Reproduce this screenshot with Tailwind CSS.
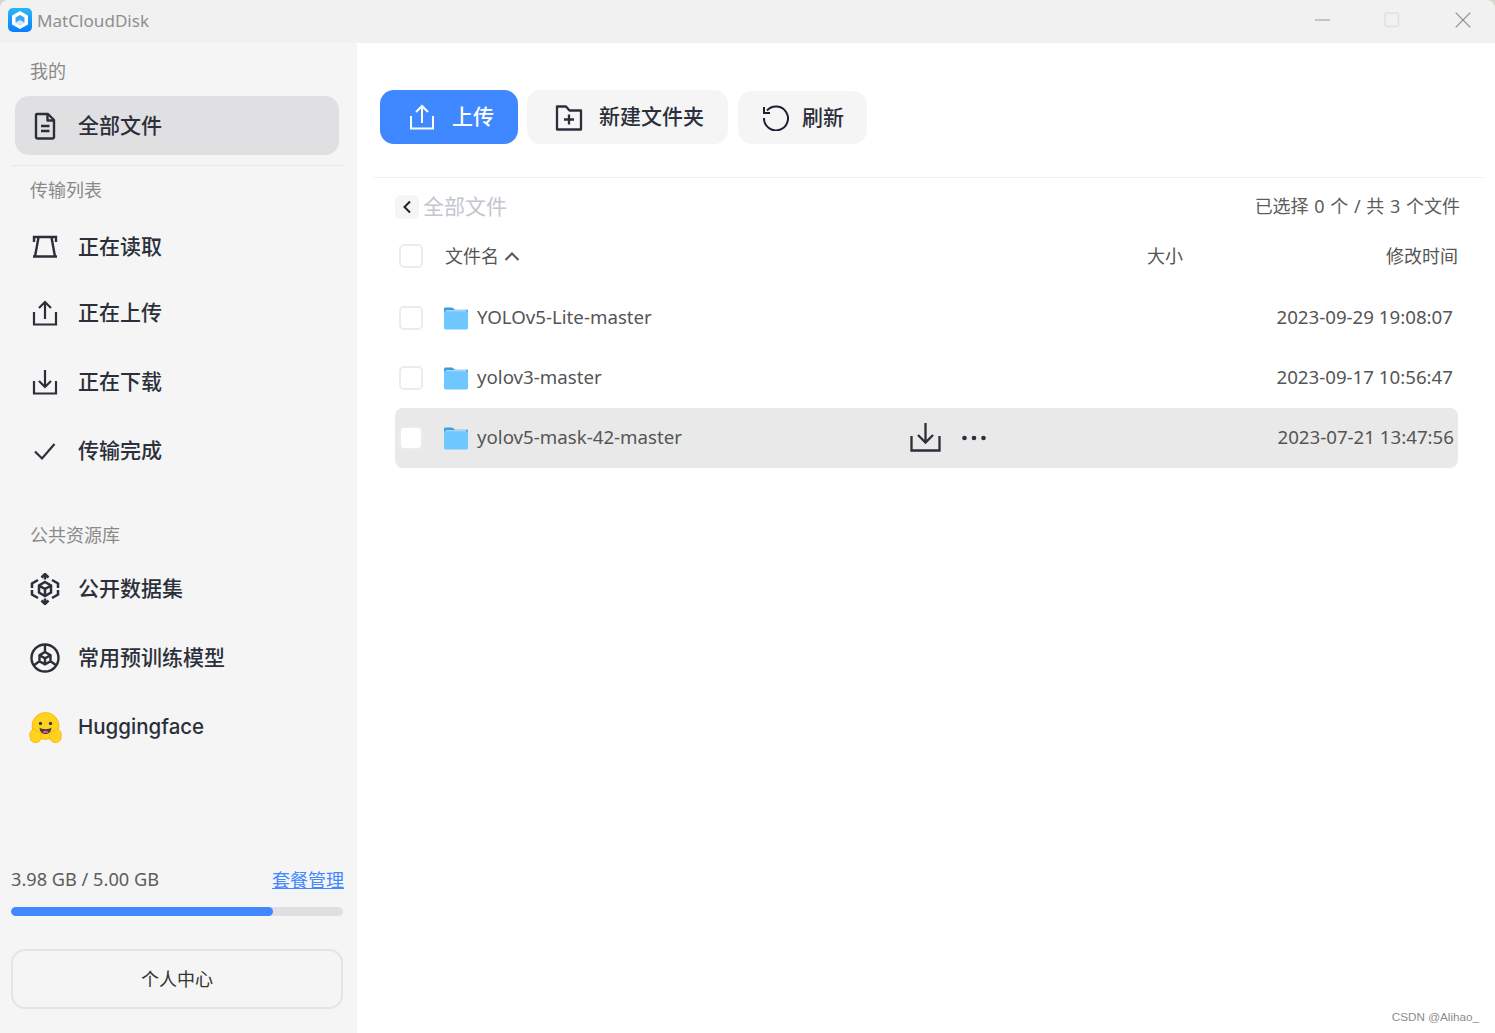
<!DOCTYPE html>
<html lang="zh-CN">
<head>
    <meta charset="UTF-8">
    <title>MatCloudDisk</title>
    <script src="https://cdn.jsdelivr.net/npm/@tailwindcss/browser@4"></script>
</head>
<body class="bg-[#d6d6ce] font-['Noto_Sans','Noto_Sans_CJK_SC',sans-serif] antialiased">
    <div class="relative w-[1495px] h-[1033px] flex flex-col overflow-hidden rounded-t-lg">
        <!-- title bar -->
        <header class="h-[43px] shrink-0 bg-[#f1f1f1] flex items-center pl-2 pb-[3px]">
            <svg width="24" height="24" viewBox="0 0 24 24">
                <defs>
                    <linearGradient id="logo" x1="0" y1="0" x2="0" y2="1">
                        <stop offset="0" stop-color="#29b6f6"/>
                        <stop offset="1" stop-color="#0a7dff"/>
                    </linearGradient>
                </defs>
                <rect width="24" height="24" rx="5" fill="url(#logo)"/>
                <path d="M12 3 20 7.600v8.800L12 21 4 16.400V7.600Z" fill="#fff"/>
                <path d="M12 7 16.500 9.600v4.800L12 17 7.500 14.400V9.600Z" fill="#3aa4f8"/>
                <path d="M7 15 12 12l5 3-5 3Z" fill="#cfeaff"/>
            </svg>
            <span class="ml-[5px] mt-[2px] text-[17.1px] text-[#8f8f8f]">MatCloudDisk</span>
            <div class="ml-auto flex items-center">
                <svg width="16" height="16" viewBox="0 0 16 16" class="mr-[53px]"><path d="M0 8h15" stroke="#9a9a9a" stroke-width="1.2"/></svg>
                <svg width="16" height="16" viewBox="0 0 16 16" class="mr-[55px]"><rect x="1" y="1" width="13.5" height="13.5" rx="2" fill="none" stroke="#dfdfdf" stroke-width="1.4"/></svg>
                <svg width="16" height="16" viewBox="0 0 16 16" class="mr-[24px]"><path d="M.7.7 15.3 15.3M15.3.7.7 15.3" stroke="#8c8c8c" stroke-width="1.2"/></svg>
            </div>
        </header>

        <div class="flex flex-1 min-h-0">
            <!-- sidebar -->
            <aside class="w-[357px] shrink-0 bg-[#f5f5f5] flex flex-col">
                <div class="h-[53px] pl-[30px] pt-[15px] text-[18px] leading-[27px] text-[#8a8a8a]">我的</div>
                <a class="h-[59px] ml-[15px] w-[324px] rounded-[14px] bg-[#e0e0e2] flex items-center pl-[17px] text-[21px] font-medium text-[#2b2f3a]">
                    <svg width="26" height="28" viewBox="0 0 26 28" class="mr-[20px] shrink-0" fill="none" stroke="#2b2f3a" stroke-width="2.4" stroke-linejoin="round"><path d="M5 2h11l6 6v17a1.500 1.500 0 0 1-1.500 1.500h-15A1.500 1.500 0 0 1 4 25V3a1 1 0 0 1 1-1Z"/><path d="M15.500 2v6.500H22M9 14h8.500M9 19h8.500"/></svg>
                    全部文件
                </a>
                <div class="mt-[10px] mx-[11px] w-[333px] h-px bg-[#e9e9e9]"></div>
                <div class="h-[51px] pl-[30px] pt-[11px] text-[18px] leading-[27px] text-[#8a8a8a]">传输列表</div>
                <a class="h-[59px] flex items-center pl-[32px] text-[21px] font-medium text-[#2b2f3a]">
                    <svg width="26" height="24" viewBox="0 0 26 24" class="mr-[20px] shrink-0" fill="none" stroke="#2b2f3a" stroke-width="2.400"><path d="M2 7V2h22v5M6.500 2.500 3 21.500h20L19.500 2.500M1 21.500h24"/></svg>
                    正在读取
                </a>
                <a class="h-[59px] mt-[7px] flex items-center pl-[32px] text-[21px] font-medium text-[#2b2f3a]">
                    <svg width="26" height="26" viewBox="0 0 26 26" class="mr-[20px] shrink-0" fill="none" stroke="#2b2f3a" stroke-width="2.200"><path d="M2 12v12.500h22V12M13 19V2M7 8l6-6 6 6"/></svg>
                    正在上传
                </a>
                <a class="h-[59px] mt-[10px] flex items-center pl-[32px] text-[21px] font-medium text-[#2b2f3a]">
                    <svg width="26" height="26" viewBox="0 0 26 26" class="mr-[20px] shrink-0" fill="none" stroke="#2b2f3a" stroke-width="2.200"><path d="M2 12v12.500h22V12M13 1v17M7 12l6 6 6-6"/></svg>
                    正在下载
                </a>
                <a class="h-[59px] mt-[10px] flex items-center pl-[32px] text-[21px] font-medium text-[#2b2f3a]">
                    <svg width="26" height="26" viewBox="0 0 26 26" class="mr-[20px] shrink-0" fill="none" stroke="#2b2f3a" stroke-width="2.200"><path d="M3 13.500 10 20.500 22.500 6"/></svg>
                    传输完成
                </a>
                <div class="h-[44px] mt-[32px] pl-[30px] pt-[10px] text-[18px] leading-[27px] text-[#8a8a8a]">公共资源库</div>
                <a class="h-[59px] mt-[3px] flex items-center pl-[30px] text-[21px] font-medium text-[#2b2f3a]">
                    <svg width="30" height="32" viewBox="0 0 30 32" class="mr-[18px] shrink-0" fill="none" stroke="#2b2f3a" stroke-width="2.500">
                        <path d="M15 9 21 12.500v7L15 23l-6-3.500v-7ZM9 12.500l6 3.500 6-3.500M15 16v7"/>
                        <path d="M15 1.500v5M11.500 4.500 15 1l3.500 3.500M15 30.500v-5M11.500 27.500 15 31l3.500-3.500"/>
                        <path d="M8 7 2 10.500V15M22 7l6 3.500V15M8 25l-6-3.500V17M22 25l6-3.500V17"/>
                    </svg>
                    公开数据集
                </a>
                <a class="h-[59px] mt-[10px] flex items-center pl-[30px] text-[21px] font-medium text-[#2b2f3a]">
                    <svg width="30" height="30" viewBox="0 0 30 30" class="mr-[18px] shrink-0" fill="none" stroke="#2b2f3a" stroke-width="2.400">
                        <circle cx="15" cy="15" r="13.500"/>
                        <path d="M15 9 20.500 12.200v6L15 21.300l-5.500-3.100v-6ZM9.500 12.200 15 15.300l5.500-3.100M15 15.300v6M15 1.500V9M20.500 18.200l6 4.200M9.500 18.200l-6 4.200"/>
                    </svg>
                    常用预训练模型
                </a>
                <a class="h-[59px] mt-[11px] flex items-center pl-[29px] text-[20.5px] font-medium font-['Inter','Noto_Sans_CJK_SC',sans-serif] text-[#2b2f3a]">
                    <svg width="33" height="32" viewBox="0 0 33 32" class="mr-[16px] shrink-0">
                        <circle cx="16.500" cy="14" r="13.500" fill="#ffd21e" stroke="#ffad03" stroke-width="0.800"/>
                        <circle cx="11.500" cy="11.500" r="1.700" fill="#3a3b45"/>
                        <circle cx="21.500" cy="11.500" r="1.700" fill="#3a3b45"/>
                        <path d="M10.500 15.500c2 2.300 10 2.300 12 0-.3 4.500-2.800 6.500-6 6.500s-5.700-2-6-6.500Z" fill="#3a3b45"/>
                        <path d="M13.500 20c1-1.600 5-1.600 6 0-1 1.300-5 1.300-6 0Z" fill="#f4517e"/>
                        <path d="M1 24c-1-3 1.500-6.500 3.500-7 1.500 0 2 1 3 2.500 1-1 3-.5 4 1.500s1.500 5-.5 7.500c-2 2.500-6 2.500-8 1S1.500 26 1 24Z" fill="#ffd21e" stroke="#ffad03" stroke-width="0.800"/>
                        <path d="M32 24c1-3-1.500-6.500-3.500-7-1.500 0-2 1-3 2.500-1-1-3-.5-4 1.500s-1.500 5 .5 7.500c2 2.500 6 2.500 8 1s2.500-3.500 2-5.500Z" fill="#ffd21e" stroke="#ffad03" stroke-width="0.800"/>
                    </svg>
                    Huggingface
                </a>

                <div class="mt-auto pb-[24px] px-[11px]">
                    <div class="flex items-center justify-between pr-[2px] text-[18px] leading-[27px] text-[#5c5c5c]">
                        <span class="text-[18.2px] -translate-y-px">3.98 GB / 5.00 GB</span>
                        <a class="text-[#3f88ff] underline">套餐管理</a>
                    </div>
                    <div class="mt-[13px] h-[9px] w-[332px] rounded-full bg-[#e0e0e2] overflow-hidden">
                        <div class="h-full w-[262px] rounded-full bg-[#3f88ff]"></div>
                    </div>
                    <button class="mt-[33px] h-[60px] w-[332px] rounded-[14px] border-2 border-[#e4e4e4] text-[18px] text-[#333]">个人中心</button>
                </div>
            </aside>

            <!-- main -->
            <main class="flex-1 min-w-0 bg-white relative">
                <div class="pt-[47px] pl-[23px] flex items-start">
                    <button class="h-[54px] w-[138px] rounded-[14px] bg-[#3f88ff] flex items-center pl-[29px] text-[21px] font-medium text-white">
                        <svg width="26" height="26" viewBox="0 0 26 26" class="mr-[17px] shrink-0" fill="none" stroke="#fff" stroke-width="2"><path d="M2 12v12.500h22V12M13 19V2M7 8l6-6 6 6"/></svg>
                        上传
                    </button>
                    <button class="ml-[9px] h-[54px] w-[201px] rounded-[14px] bg-[#f5f5f5] flex items-center pl-[28px] text-[21px] font-medium text-[#2b2f3a]">
                        <svg width="28" height="27" viewBox="0 0 28 27" class="mr-[16px] shrink-0" fill="none" stroke="#2b2f3a" stroke-width="2.300" stroke-linejoin="round"><path d="M2 2.500h9l3.500 4H26v19H2ZM14 10.500v10M9 15.500h10"/></svg>
                        新建文件夹
                    </button>
                    <button class="ml-[10px] mt-px h-[53px] w-[129px] rounded-[14px] bg-[#f5f5f5] flex items-center pl-[24px] text-[21px] font-medium text-[#2b2f3a]">
                        <svg width="27" height="26" viewBox="0 0 27 26" class="mr-[13px] shrink-0" fill="none" stroke="#1a2233" stroke-width="2"><path d="M5 5.500A12 12 0 1 1 2 13M2 2v6h6"/></svg>
                        刷新
                    </button>
                </div>
                <div class="mt-[33px] ml-[16px] w-[1111px] h-px bg-[#f0f0f0]"></div>

                <div class="ml-[38px] w-[1063px]">
                    <div class="h-[56px] flex items-center pt-[1px] pr-0">
                        <span class="w-6 h-6 rounded-md bg-[#f5f5f5] flex items-center justify-center">
                            <svg width="10" height="14" viewBox="0 0 10 14" fill="none" stroke="#222" stroke-width="2"><path d="M8 1.500 2.500 7 8 12.500"/></svg>
                        </span>
                        <span class="ml-1 text-[21px] text-[#c3c6cf]">全部文件</span>
                        <span class="ml-auto -mr-[2px] text-[18px] text-[#5c5c5c] [word-spacing:1px]">已选择 0 个 / 共 3 个文件</span>
                    </div>
                    <div class="h-[44px] flex items-center pl-1 text-[18px] text-[#555]">
                        <span class="w-6 h-6 rounded-[5px] border-2 border-[#ececec] bg-white"></span>
                        <span class="ml-[22px]">文件名</span>
                        <svg width="16" height="11" viewBox="0 0 16 11" class="ml-[5px]" fill="none" stroke="#555" stroke-width="2"><path d="M1.500 9 8 2.500 14.500 9"/></svg>
                        <span class="ml-[627px]">大小</span>
                        <span class="ml-auto">修改时间</span>
                    </div>

                    <div class="mt-[10px] h-[60px] flex items-center pl-1 pr-[5px] text-[18.7px] text-[#555]">
                        <span class="w-6 h-6 rounded-[5px] border-2 border-[#ececec] bg-white"></span>
                        <svg width="24" height="24" viewBox="0 0 25 24" class="ml-[21px] shrink-0"><path d="M0 2.500A1.500 1.500 0 0 1 1.500 1h7l3 2.500H25V6H0Z" fill="#3a9ee4"/><path d="M0 5h25v17.500a1.500 1.500 0 0 1-1.500 1.500h-22A1.500 1.500 0 0 1 0 22.500Z" fill="#6ec8ff"/><path d="M2 4.500h21" stroke="#dff3ff"/></svg>
                        <span class="ml-[9px] pb-[2px]">YOLOv5-Lite-master</span>
                        <span class="ml-auto pb-[2px]">2023-09-29 19:08:07</span>
                    </div>
                    <div class="h-[60px] flex items-center pl-1 pr-[5px] text-[18.7px] text-[#555]">
                        <span class="w-6 h-6 rounded-[5px] border-2 border-[#ececec] bg-white"></span>
                        <svg width="24" height="24" viewBox="0 0 25 24" class="ml-[21px] shrink-0"><path d="M0 2.500A1.500 1.500 0 0 1 1.500 1h7l3 2.500H25V6H0Z" fill="#3a9ee4"/><path d="M0 5h25v17.500a1.500 1.500 0 0 1-1.500 1.500h-22A1.500 1.500 0 0 1 0 22.500Z" fill="#6ec8ff"/><path d="M2 4.500h21" stroke="#dff3ff"/></svg>
                        <span class="ml-[9px] pb-[2px]">yolov3-master</span>
                        <span class="ml-auto pb-[2px]">2023-09-17 10:56:47</span>
                    </div>
                    <div class="h-[60px] rounded-lg bg-[#e9e9e9] flex items-center pl-1 pr-[4px] text-[18.7px] text-[#555]">
                        <span class="w-6 h-6 rounded-[5px] border-2 border-[#ececec] bg-white"></span>
                        <svg width="24" height="24" viewBox="0 0 25 24" class="ml-[21px] shrink-0"><path d="M0 2.500A1.500 1.500 0 0 1 1.500 1h7l3 2.500H25V6H0Z" fill="#3a9ee4"/><path d="M0 5h25v17.500a1.500 1.500 0 0 1-1.500 1.500h-22A1.500 1.500 0 0 1 0 22.500Z" fill="#6ec8ff"/><path d="M2 4.500h21" stroke="#dff3ff"/></svg>
                        <span class="ml-[9px] w-[433px] shrink-0 pb-[2px]">yolov5-mask-42-master</span>
                        <svg width="31" height="31" viewBox="0 0 31 31" class="shrink-0 -mt-[1px]" fill="none" stroke="#2b2f3a" stroke-width="2.300"><path d="M1.500 14v14.500h28V14M15.500 1v19M8 13l7.500 7.500L23 13"/></svg>
                        <svg width="26" height="6" viewBox="0 0 26 6" class="ml-[20px] shrink-0 -mt-[1px]" fill="#2b2f3a"><circle cx="3.500" cy="3" r="2.300"/><circle cx="13" cy="3" r="2.300"/><circle cx="22.500" cy="3" r="2.300"/></svg>
                        <span class="ml-auto pb-[2px]">2023-07-21 13:47:56</span>
                    </div>
                </div>
                <span class="absolute right-[16px] bottom-[7px] text-[11.7px] font-['Liberation_Sans',sans-serif] text-[#8c8c8c]">CSDN @Alihao_</span>
            </main>
        </div>
    </div>
</body>
</html>
